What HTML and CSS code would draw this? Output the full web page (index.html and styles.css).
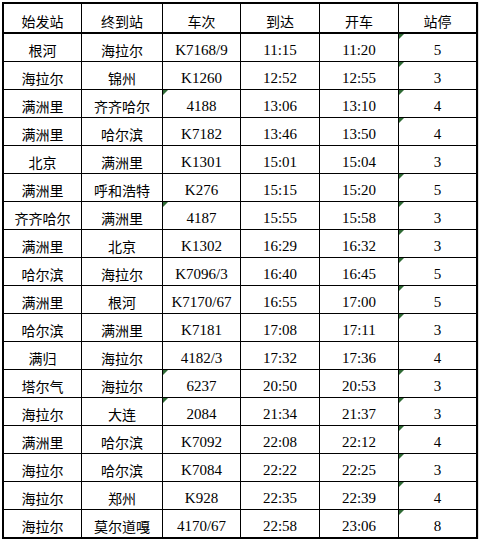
FILE: index.html
```html
<!DOCTYPE html>
<html lang="zh-CN">
<head>
<meta charset="utf-8">
<title>列车时刻表</title>
<link rel="stylesheet" href="styles.css">
</head>
<body>
<div class="sheet">
  <div class="grid">
    <div class="cell head">始发站</div><div class="cell head">终到站</div><div class="cell head">车次</div><div class="cell head">到达</div><div class="cell head">开车</div><div class="cell head">站停</div>

    <div class="cell">根河</div><div class="cell">海拉尔</div><div class="cell num">K7168/9</div><div class="cell num">11:15</div><div class="cell num">11:20</div><div class="cell num flag">5</div>
    <div class="cell">海拉尔</div><div class="cell">锦州</div><div class="cell num">K1260</div><div class="cell num">12:52</div><div class="cell num">12:55</div><div class="cell num flag">3</div>
    <div class="cell">满洲里</div><div class="cell">齐齐哈尔</div><div class="cell num flag">4188</div><div class="cell num">13:06</div><div class="cell num">13:10</div><div class="cell num flag">4</div>
    <div class="cell">满洲里</div><div class="cell">哈尔滨</div><div class="cell num">K7182</div><div class="cell num">13:46</div><div class="cell num">13:50</div><div class="cell num flag">4</div>
    <div class="cell">北京</div><div class="cell">满洲里</div><div class="cell num">K1301</div><div class="cell num">15:01</div><div class="cell num">15:04</div><div class="cell num">3</div>
    <div class="cell">满洲里</div><div class="cell">呼和浩特</div><div class="cell num">K276</div><div class="cell num">15:15</div><div class="cell num">15:20</div><div class="cell num flag">5</div>
    <div class="cell">齐齐哈尔</div><div class="cell">满洲里</div><div class="cell num flag">4187</div><div class="cell num">15:55</div><div class="cell num">15:58</div><div class="cell num flag">3</div>
    <div class="cell">满洲里</div><div class="cell">北京</div><div class="cell num">K1302</div><div class="cell num">16:29</div><div class="cell num">16:32</div><div class="cell num flag">3</div>
    <div class="cell">哈尔滨</div><div class="cell">海拉尔</div><div class="cell num">K7096/3</div><div class="cell num">16:40</div><div class="cell num">16:45</div><div class="cell num flag">5</div>
    <div class="cell">满洲里</div><div class="cell">根河</div><div class="cell num">K7170/67</div><div class="cell num">16:55</div><div class="cell num">17:00</div><div class="cell num flag">5</div>
    <div class="cell">哈尔滨</div><div class="cell">满洲里</div><div class="cell num">K7181</div><div class="cell num">17:08</div><div class="cell num">17:11</div><div class="cell num flag">3</div>
    <div class="cell">满归</div><div class="cell">海拉尔</div><div class="cell num">4182/3</div><div class="cell num">17:32</div><div class="cell num">17:36</div><div class="cell num">4</div>
    <div class="cell">塔尔气</div><div class="cell">海拉尔</div><div class="cell num flag">6237</div><div class="cell num">20:50</div><div class="cell num">20:53</div><div class="cell num flag">3</div>
    <div class="cell">海拉尔</div><div class="cell">大连</div><div class="cell num flag">2084</div><div class="cell num">21:34</div><div class="cell num">21:37</div><div class="cell num flag">3</div>
    <div class="cell">满洲里</div><div class="cell">哈尔滨</div><div class="cell num">K7092</div><div class="cell num">22:08</div><div class="cell num">22:12</div><div class="cell num flag">4</div>
    <div class="cell">海拉尔</div><div class="cell">哈尔滨</div><div class="cell num">K7084</div><div class="cell num">22:22</div><div class="cell num">22:25</div><div class="cell num flag">3</div>
    <div class="cell">海拉尔</div><div class="cell">郑州</div><div class="cell num">K928</div><div class="cell num">22:35</div><div class="cell num">22:39</div><div class="cell num flag">4</div>
    <div class="cell">海拉尔</div><div class="cell">莫尔道嘎</div><div class="cell num">4170/67</div><div class="cell num">22:58</div><div class="cell num">23:06</div><div class="cell num flag">8</div>
  </div>
</div>
</body>
</html>
```
FILE: styles.css
```css
html, body {
  margin: 0;
  padding: 0;
  background: #ffffff;
}

body {
  padding: 2px 0 0 2px;
  font-family: "Noto Sans CJK SC", "Noto Sans", sans-serif;
  color: #000;
}

.sheet {
  width: 472px;
  border: 2px solid #000;
  box-shadow: 1px 0 0 #e2e2e2;
}

.grid {
  display: grid;
  grid-template-columns: 77px 80px 77px 78px 78px 77px;
  grid-template-rows: 29px;
  grid-auto-rows: 27px;
  gap: 1px;
  background: #000;
}

.cell {
  position: relative;
  background: #fff;
  display: flex;
  align-items: center;
  justify-content: center;
  padding-top: 4px;
  box-sizing: border-box;
  font-size: 14px;
  line-height: 16px;
  white-space: nowrap;
}

.head {
  border-bottom: 1px solid #000;
  padding-top: 5px;
  font-size: 14px;
}

.num {
  font-family: "Liberation Serif", "DejaVu Serif", serif;
  font-size: 15px;
  padding-top: 5px;
}

.flag::before {
  content: "";
  position: absolute;
  left: 0;
  top: 0;
  width: 0;
  height: 0;
  border-top: 5px solid #2f6a35;
  border-right: 5px solid transparent;
}
```
